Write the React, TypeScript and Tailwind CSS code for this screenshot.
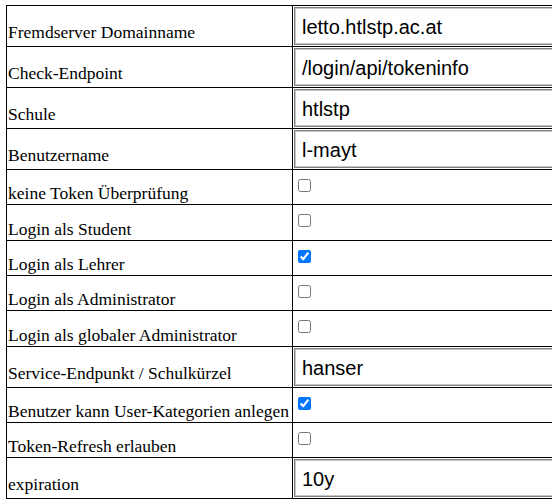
import React from 'react'

type Row = {
    label: string
    value?: string
    checked?: boolean
    h: string
}

const rows: Row[] = [
    { label: 'Fremdserver Domainname', value: 'letto.htlstp.ac.at', h: 'h-[41px]' },
    { label: 'Check-Endpoint', value: '/login/api/tokeninfo', h: 'h-[41px]' },
    { label: 'Schule', value: 'htlstp', h: 'h-[41px]' },
    { label: 'Benutzername', value: 'l-mayt', h: 'h-[41px]' },
    { label: 'keine Token Überprüfung', checked: false, h: 'h-[35px]' },
    { label: 'Login als Student', checked: false, h: 'h-[36px]' },
    { label: 'Login als Lehrer', checked: true, h: 'h-[35px]' },
    { label: 'Login als Administrator', checked: false, h: 'h-[35px]' },
    { label: 'Login als globaler Administrator', checked: false, h: 'h-[36px]' },
    { label: 'Service-Endpunkt / Schulkürzel', value: 'hanser', h: 'h-[41px]' },
    { label: 'Benutzer kann User-Kategorien anlegen', checked: true, h: 'h-[35px]' },
    { label: 'Token-Refresh erlauben', checked: false, h: 'h-[35px]' },
    { label: 'expiration', value: '10y', h: 'h-[41px]' },
]

function App() {
    return (
        <div className="w-[552px] h-[503px] overflow-hidden bg-white pt-[5px] pl-[6px]">
            <div className="w-[700px] border-t border-l border-black font-['Liberation_Serif',serif] text-[17.5px] text-black">
                {rows.map((row) => {
                    const isText = row.value !== undefined
                    return (
                        <div key={row.label} className={`flex border-b border-black ${row.h}`}>
                            <div className={`w-[286px] shrink-0 border-r border-black pl-px flex items-end whitespace-nowrap leading-[21px] ${isText ? 'pb-[3px]' : 'pb-0'}`}>
                                {row.label}
                            </div>
                            {isText ? (
                                <div className="pl-px pt-px">
                                    <input
                                        type="text"
                                        defaultValue={row.value}
                                        className="block w-[320px] h-[38px] border border-[#808080] shadow-[inset_0_0_0_1px_#c6c6c6] bg-white pl-[7px] pt-[3px] font-['Liberation_Sans',Arial,sans-serif] text-[20px] text-black"
                                    />
                                </div>
                            ) : (
                                <div className="pl-[5px] pt-[9px]">
                                    <input type="checkbox" defaultChecked={row.checked} className="block w-[13px] h-[13px]" />
                                </div>
                            )}
                        </div>
                    )
                })}
            </div>
        </div>
    )
}

export default App
